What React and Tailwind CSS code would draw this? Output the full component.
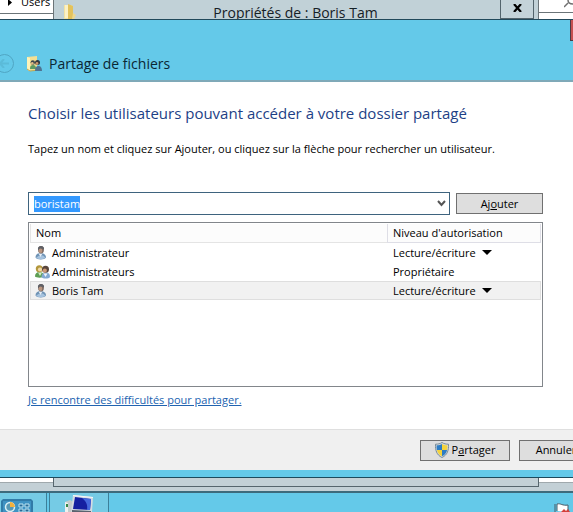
import { useEffect, useRef } from "react";

function FolderIcon() {
  return (
    <svg width="14" height="15" viewBox="0 0 14 15" aria-hidden="true">
      <path d="M1 1h8v14H1z" fill="#f3e3a0" />
      <path d="M5 0l5 2v13H5z" fill="#e3c25c" />
      <path d="M2 1h3v13H2z" fill="#fbf1c6" />
      <path d="M10 9l3 2-2 4h-2z" fill="#ecd88f" />
    </svg>
  );
}

function ShareIcon() {
  return (
    <svg width="16" height="16" viewBox="0 0 16 16" aria-hidden="true">
      <path d="M1 1l10-1v14l-8 1-2-2z" fill="#f2df93" />
      <path d="M1 1l3 1v13l-3-2z" fill="#fff3b8" />
      <path d="M1 13l3 2 9-1" fill="none" stroke="#c5a94d" />
      <circle cx="6.800" cy="6.500" r="2.200" fill="#39454c" />
      <circle cx="11.500" cy="6.500" r="2.500" fill="#33383c" />
      <circle cx="11" cy="7.500" r="1.400" fill="#c89368" />
      <circle cx="6.300" cy="7.300" r="1.300" fill="#e0bb84" />
      <path d="M4 13c0-3 1-4 3-4s3 1 3 4z" fill="#5c9a62" />
      <path d="M9 15c0-3 1-5 3.500-5s3.500 2 3.500 5z" fill="#4f7391" />
    </svg>
  );
}

function UserIcon() {
  return (
    <svg width="15" height="16" viewBox="0 0 15 16" aria-hidden="true">
      <path d="M.5 12.500C.5 9.500 2.500 8 5.500 8s5.500 1.500 5.500 4.500c-1 2.500-9.500 2.500-10.500 0z" fill="#6f93b5" />
      <path d="M1 12.800c1.500 1.800 8 1.800 9.500 0L8 10.500l-4.500.5z" fill="#a5c2de" />
      <path d="M3.500 8.500h4l-2 3.500z" fill="#e6eef5" />
      <ellipse cx="6" cy="4.800" rx="2.900" ry="3.800" fill="#7d6960" />
      <path d="M3 5C2.500 2 4 1 6 1s3.500 1.200 3 3.500L7 3.500z" fill="#5e6066" />
      <ellipse cx="5.500" cy="5.800" rx="1.800" ry="2.200" fill="#b9957f" />
    </svg>
  );
}

function GroupIcon() {
  return (
    <svg width="15" height="16" viewBox="0 0 15 16" aria-hidden="true">
      <path d="M0 12.500C0 9.500 1.500 8 4.500 8S9 9.500 9 12.500c-1 1.500-8 1.500-9 0z" fill="#5f9f55" />
      <path d="M3 8.500h4l-2 3.500z" fill="#dcecc8" />
      <circle cx="4.300" cy="4.800" r="3.500" fill="#b3973c" />
      <circle cx="5" cy="5.500" r="2.100" fill="#f0d9a8" />
      <path d="M6.500 13c0-3 1.500-4.500 4.500-4.500s4 1.500 4 4.500c-1 2-7.500 2-8.500 0z" fill="#83a9d2" />
      <path d="M8.500 9.500h4l-2 3.500z" fill="#eff5fa" />
      <circle cx="10.500" cy="5.300" r="3.500" fill="#59463c" />
      <circle cx="9.800" cy="6.600" r="2.100" fill="#cc9874" />
    </svg>
  );
}

function ShieldIcon() {
  return (
    <svg width="14" height="16" viewBox="0 0 14 16" aria-hidden="true">
      <path d="M7 .5c2 1.300 4 1.700 6.500 1.700C13.800 8 12.500 13 7 15.500 1.500 13 .2 8 .5 2.200 3 2.200 5 1.800 7 .5z" fill="#d8dde0" stroke="#788a96" />
      <path d="M7 2v6H1.900C1.500 6.500 1.500 5 1.600 3.300 4 3.200 5.500 2.900 7 2z" fill="#2d7cc4" />
      <path d="M7 2v6h5.100c.4-1.500.4-3 .3-4.700C10 3.200 8.500 2.900 7 2z" fill="#f4d33c" />
      <path d="M7 8v6.300C4.200 13 2.500 10.800 1.900 8z" fill="#f4d33c" />
      <path d="M7 8v6.300c2.800-1.300 4.500-3.500 5.100-6.300z" fill="#2d7cc4" />
    </svg>
  );
}

function ControlPanelIcon() {
  return (
    <svg width="32" height="13" viewBox="0 0 32 13" aria-hidden="true">
      <path d="M0 13V2l2-2h28l2 2v11z" fill="#317ba8" />
      <path d="M2 13V2h28v11z" fill="#3f93c3" />
      <circle cx="9" cy="8" r="4.500" fill="#5798b4" stroke="#d8eff5" strokeWidth="1.500" />
      <path d="M9 8V3a5 5 0 015 5z" fill="#f3b13d" />
      <path d="M18 5h4v3h-4zM24 5h4v3h-4zM18 10h4v3h-4zM24 10h4v3h-4z" fill="#276b98" stroke="#bce5f2" />
    </svg>
  );
}

function ComputerIcon() {
  return (
    <svg width="30" height="17" viewBox="0 0 30 17" aria-hidden="true">
      <path d="M1 7l5-2 5 3v9H1z" fill="#c3cccb" />
      <path d="M1 7l3 1v9H1z" fill="#eef1ef" />
      <path d="M2 9h2v3H2z" fill="#368747" />
      <path d="M9 0l20 2-1 15H7z" fill="#d5dbe1" />
      <path d="M11 2l16 2-1 11-17-1z" fill="#1520a0" />
      <path d="M18 3l9 1-1 11h-3c1-5-1-9-5-12z" fill="#4468dc" />
      <path d="M9 0l20 2v1L9 1z" fill="#f5f6f8" />
      <path d="M8 15l19 1v1H8z" fill="#59636f" />
    </svg>
  );
}

function FlagIcon() {
  return (
    <svg width="18" height="9" viewBox="0 0 18 9" aria-hidden="true">
      <path d="M2 9V1M4 8V1c4-1 5 2 11 1v7" fill="#fff" stroke="#485a66" />
      <path d="M8 9l3-3 2 2 2-2 2 3z" fill="#d3403b" />
    </svg>
  );
}

function Background() {
  return (
    <div className="flex h-[19px] overflow-hidden bg-[#c1d1d7]">
      <div className="flex w-[54px] shrink-0 flex-col border-r border-[#6b7478] bg-white">
        <div className="flex h-[14px] items-end gap-[9px] border-b border-[#6b7478] pl-[8px]">
          <svg width="4" height="14" viewBox="0 0 4 14" aria-hidden="true">
            <path d="M0 0l4 3.500L0 7z" fill="#000" />
          </svg>
          <span className="pb-[2px] text-[11px] leading-[18px]">Users</span>
        </div>
      </div>
      <div className="flex min-w-0 flex-1 items-start pl-[9px]">
        <div className="pt-[4px]"><FolderIcon /></div>
        <div className="flex-1 pl-[14px] text-center text-[14px] leading-[26px] text-[#152026]">
          Propriétés de : Boris Tam
        </div>
        <button aria-label="Fermer les propriétés" className="mr-[4px] flex h-[19px] w-[34px] items-center justify-center border-x border-b border-[#53646c] bg-[#c4d3d9] pb-[3px]">
          <svg width="9" height="8" viewBox="0 0 9 8" aria-hidden="true">
            <path d="M1 0l7 8M8 0L1 8" stroke="#000" strokeWidth="2.200" />
          </svg>
        </button>
      </div>
      <div className="w-[35px] shrink-0 border-l border-[#6b7478] bg-white">
        <div className="flex h-[13px] justify-end border-b border-[#6b7478]">
          <svg width="9" height="8" viewBox="0 0 9 8" aria-hidden="true">
            <path d="M0 7l4-4M4 0c0 3 2 4 5 4" stroke="#707070" strokeWidth="1.500" fill="none" />
          </svg>
        </div>
      </div>
    </div>
  );
}

function TitleBar() {
  return (
    <header className="flex h-[63px] items-start border-t border-b-2 border-t-[#21495b] border-b-[#7fa9b8] bg-[#64c9e9]">
      <div className="-ml-[5px] mt-[34px] flex h-[19px] w-[19px] items-center justify-center rounded-full border border-[#50a6c4]">
        <svg width="11" height="9" viewBox="0 0 11 9" aria-hidden="true">
          <path d="M5 0L1 4.500 5 9M1 4.500h9" fill="none" stroke="#5bbbd9" strokeWidth="2" />
        </svg>
      </div>
      <div className="ml-[12px] mt-[36px]"><ShareIcon /></div>
      <h1 className="ml-[7px] mt-[32px] flex-1 text-[14px] leading-[24px] text-[#0b2733]">Partage de fichiers</h1>
      <button aria-label="Fermer" className="h-[21px] w-[3px] border-b border-l border-[#4b3a44] bg-[#c75050]" />
    </header>
  );
}

function PermissionSelect({ name }) {
  return (
    <label className="flex items-center gap-[6px]">
      <select aria-label={"Autorisation de " + name} className="field-sizing-content appearance-none bg-transparent p-0 leading-[17px] outline-none">
        <option>Lecture/écriture</option>
        <option>Lecture</option>
        <option>Supprimer</option>
      </select>
      <svg width="10" height="5" viewBox="0 0 10 5" aria-hidden="true">
        <path d="M0 0h10L5 5z" fill="#000" />
      </svg>
    </label>
  );
}

const users = [
  { name: "Administrateur", group: false, editable: true, selected: false },
  { name: "Administrateurs", group: true, editable: false, selected: false },
  { name: "Boris Tam", group: false, editable: true, selected: true },
];

function UserTable() {
  return (
    <div className="mt-[7px] h-[165px] border border-[#82868b] p-px">
      <table className="w-full table-fixed border-separate border-spacing-0 text-left">
        <thead>
          <tr className="h-[19px] bg-[#fcfcfc]">
            <th className="border-b border-l border-[#e4e4e4] p-0 pl-[5px] font-normal leading-[18px]">Nom</th>
            <th className="w-[154px] border-x border-b border-[#dedee6] p-0 pl-[5px] font-normal leading-[18px]">Niveau d'autorisation</th>
          </tr>
        </thead>
        <tbody>
          {users.map((user) => (
            <tr key={user.name} className={user.selected ? "bg-[#f1f1f1]" : ""}>
              <td className={"h-[19px] border-y border-l p-0 pl-[4px] " + (user.selected ? "border-[#dedede]" : "border-transparent")}>
                <div className="flex h-[17px] items-center gap-[2px] leading-[17px]">
                  {user.group ? <GroupIcon /> : <UserIcon />}
                  {user.name}
                </div>
              </td>
              <td className={"h-[19px] border-y border-r p-0 pl-[6px] leading-[17px] " + (user.selected ? "border-[#dedede]" : "border-transparent")}>
                {user.editable ? <PermissionSelect name={user.name} /> : "Propriétaire"}
              </td>
            </tr>
          ))}
        </tbody>
      </table>
    </div>
  );
}

function Taskbar() {
  return (
    <footer>
      <div className="flex h-[14px] items-start border-t border-[#1d4a5d] bg-[#c3d0d6]">
        <div className="h-[5px] w-[53px] border-b border-[#a0a9ad] bg-white" />
        <div className="h-[9px] flex-1 border-x border-b border-[#56656d]" />
        <div className="h-[5px] w-[34px] border-b border-[#a0a9ad] bg-white" />
      </div>
      <div className="flex h-[21px] overflow-hidden border-t-2 border-[#3d6a7c] bg-[#64c9e9]">
        <button aria-label="Panneau de configuration" className="flex w-[47px] items-end border-r border-[#3c8099] bg-[#75cbe5] pl-px">
          <ControlPanelIcon />
        </button>
        <button aria-label="Ordinateur" className="ml-[2px] flex w-[60px] items-end justify-center border-x border-[#3c8099] bg-[#75cbe5]">
          <ComputerIcon />
        </button>
        <button aria-label="Centre de maintenance" className="ml-auto mr-[2px] flex items-end">
          <FlagIcon />
        </button>
      </div>
    </footer>
  );
}

export default function App() {
  const nameRef = useRef(null);
  useEffect(() => {
    nameRef.current.focus();
    nameRef.current.select();
  }, []);

  return (
    <div className="overflow-hidden bg-white font-['Open_Sans','Noto_Sans',sans-serif] text-[11px] text-black">
      <Background />
      <TitleBar />
      <main className="flex flex-col pl-[28px] pr-[30px] pt-[19px]">
        <h2 className="whitespace-nowrap text-[15px] leading-[24px] text-[#1d3f86]">
          Choisir les utilisateurs pouvant accéder à votre dossier partagé
        </h2>
        <p className="mt-[15px] whitespace-nowrap leading-[18px]">
          Tapez un nom et cliquez sur Ajouter, ou cliquez sur la flèche pour rechercher un utilisateur.
        </p>
        <div className="mt-[34px] flex h-[23px] items-center gap-[6px]">
          <div className="flex h-full flex-1 items-center border border-[#3e637e] pl-[5px] pr-[3px]">
            <input
              ref={nameRef}
              aria-label="Nom de l'utilisateur"
              defaultValue="boristam"
              className="h-[16px] min-w-0 flex-1 leading-[16px] outline-none selection:bg-[#3399ff] selection:text-white"
            />
            <button aria-label="Afficher la liste" className="flex">
              <svg width="9" height="7" viewBox="0 0 9 7" aria-hidden="true">
                <path d="M1 1l3.500 4L8 1" fill="none" stroke="#555" strokeWidth="2" />
              </svg>
            </button>
          </div>
          <button className="h-[21px] w-[87px] border border-[#707070] bg-[#dedede] leading-[18px]">
            Aj<u>o</u>uter
          </button>
        </div>
        <UserTable />
        <a href="#aide" className="mt-[4px] self-start leading-[18px] text-[#2163b0] underline">
          Je rencontre des difficultés pour partager.
        </a>
      </main>
      <div className="mt-[20px] flex h-[41px] items-center justify-end gap-[9px] border-t border-[#dfdfdf] bg-[#f0f0f0]">
        <button className="flex h-[21px] w-[90px] shrink-0 items-center justify-center gap-[3px] border border-[#707070] bg-[#dedede] leading-[18px]">
          <ShieldIcon />
          <span>P<u>a</u>rtager</span>
        </button>
        <button className="-mr-5 h-[21px] w-[74px] shrink-0 border border-[#707070] bg-[#dedede] leading-[18px]">Annuler</button>
      </div>
      <div className="h-[7px] bg-[#64c9e9]" />
      <Taskbar />
    </div>
  );
}
